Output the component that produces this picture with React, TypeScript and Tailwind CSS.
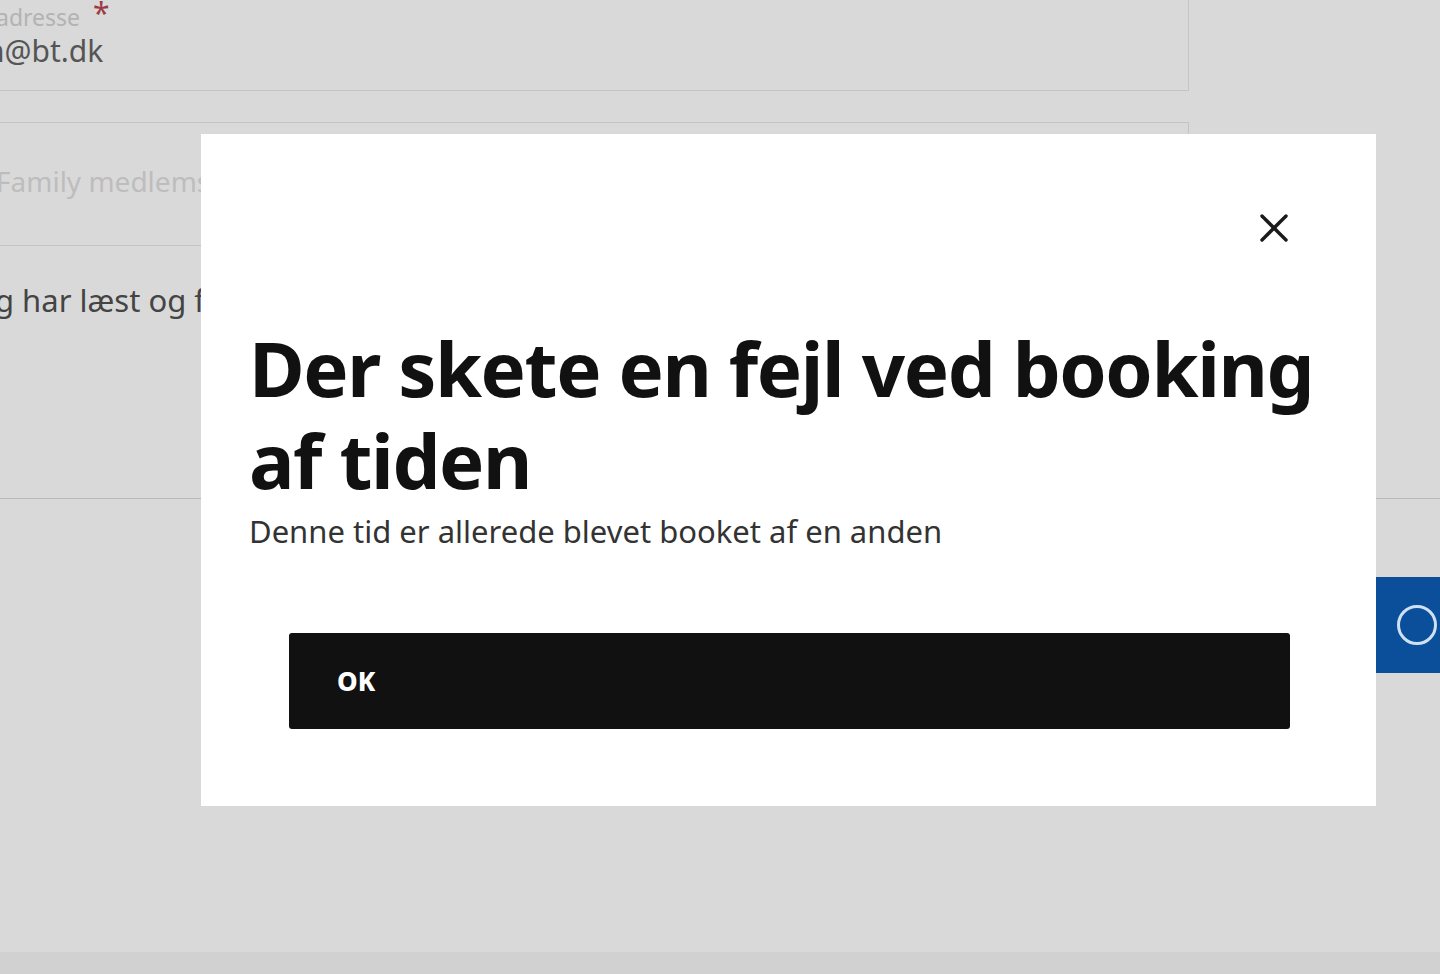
import { X } from "lucide-react";

const font = { fontFamily: '"Noto Sans", "Open Sans", sans-serif' };

export default function App() {
  return (
    <div
      className="relative h-[974px] w-full overflow-hidden bg-[#d9d9d9]"
      style={font}
    >
      {/* dimmed booking form behind the dialog */}
      <div className="flex flex-col">
        <div className="h-[91px] w-[1189px] border-r border-b border-[#c4c4c4]">
          <div className="flex h-[32px] items-start pt-[3px]">
            <span className="-ml-[4px] text-[23px] leading-[29px] text-[#b3b3b3]">
              adresse
            </span>
            <span className="ml-[13px] -mt-[1px] text-[30px] leading-[22px] text-[#9c3a44]">*</span>
          </div>
          <div className="-ml-[14px] text-[30px] leading-[38px] text-[#555]">n@bt.dk</div>
        </div>

        <div className="mt-[31px] h-[124px] w-[1189px] border-t border-r border-b border-[#c4c4c4]">
          <div className="-ml-[4px] w-[205px] overflow-hidden whitespace-nowrap pt-[38px] text-[28px] leading-[40px] text-[#bdbdbd]">
            Family medlemsnummer
          </div>
        </div>

        <div className="-ml-[5px] mt-[34px] w-[210px] overflow-hidden whitespace-nowrap text-[31px] leading-[40px] text-[#444]">
          g har læst og forstået betingelserne
        </div>

        <div className="mt-[178px] h-px w-full bg-[#b9b9b9]" />

        <div className="mt-[78px] flex justify-end">
          <div className="flex h-[96px] w-[64px] items-center bg-[#0b4f9b] pl-[21px]">
            <span className="block h-[40px] w-[40px] shrink-0 rounded-full border-[3px] border-[#cfe0f3]" />
          </div>
        </div>
      </div>

      <div className="absolute inset-x-0 bottom-0 h-[22px] bg-[#d1d1d1]" />

      {/* error dialog */}
      <div className="absolute left-[201px] top-[134px] flex h-[672px] w-[1175px] flex-col bg-white">
        <div className="flex justify-end pr-[78px] pt-[70px]">
          <button className="flex h-[48px] w-[48px] items-center justify-center text-[#1a1a1a]">
            <X size={48} strokeWidth={1.7} />
          </button>
        </div>
        <div className="pl-[48px] pr-[20px] pt-[70px]">
          <h1 className="text-[76px] font-bold leading-[92px] tracking-[-1.4px] text-[#111]">
            Der skete en fejl ved booking af tiden
          </h1>
          <p className="mt-[5px] text-[31px] leading-[40px] text-[#333]">
            Denne tid er allerede blevet booket af en anden
          </p>
        </div>
        <div className="pl-[88px] pt-[82px]">
          <button className="flex h-[96px] w-[1001px] items-center rounded-[3px] bg-[#111] pl-[48px] text-[26px] font-extrabold text-white">
            OK
          </button>
        </div>
      </div>
    </div>
  );
}
